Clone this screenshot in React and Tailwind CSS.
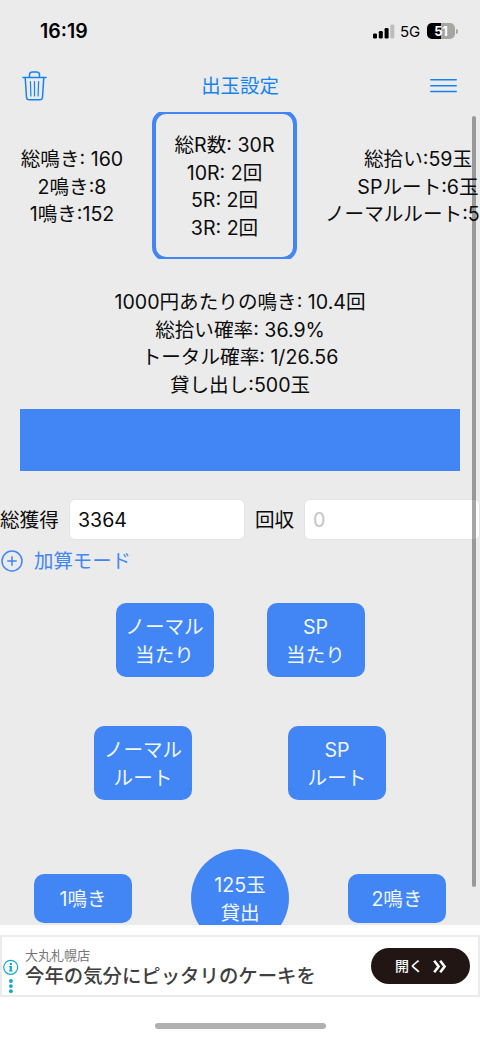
import React from 'react';

const leftStats = ['総鳴き: 160', '2鳴き:8', '1鳴き:152'];
const roundStats = ['総R数: 30R', '10R: 2回', '5R: 2回', '3R: 2回'];
const rightStats = ['総拾い:59玉', 'SPルート:6玉', 'ノーマルルート:53玉'];
const summary = ['1000円あたりの鳴き: 10.4回', '総拾い確率: 36.9%', 'トータル確率: 1/26.56', '貸し出し:500玉'];

function Lines({ items }) {
  return items.map((item) => (
    <p key={item} className="whitespace-nowrap">{item}</p>
  ));
}

function StatusBar() {
  return (
    <div className="flex h-[62px] shrink-0 items-center justify-between pl-10 pr-[22px] text-black">
      <span className="pt-px text-[19.5px] font-semibold">16:19</span>
      <div className="flex items-center">
        <svg width="22" height="15" viewBox="0 0 22 15">
          <rect x="0" y="9.5" width="4" height="5" rx="1.2" />
          <rect x="5.8" y="7" width="4" height="7.5" rx="1.2" />
          <rect x="11.6" y="4" width="4" height="10.5" rx="1.2" />
          <rect x="17.3" y="0.5" width="4" height="14" rx="1.2" fill="#bdbdbd" />
        </svg>
        <span className="ml-[5px] w-[23px] pt-px text-[15px] tracking-[-0.1px]">5G</span>
        {/* Battery */}
        <div className="ml-[4px] flex h-4 w-[28px] items-center justify-center overflow-hidden rounded-[5px] bg-[linear-gradient(90deg,#000_51%,#a5a5a5_51%)] text-[13px] font-bold leading-none tracking-[-0.3px] text-white">
          51
        </div>
        <div className="ml-px h-[5px] w-[2px] rounded-r-full bg-[#a5a5a5]" />
      </div>
    </div>
  );
}

function NavBar() {
  return (
    <header className="flex h-[50px] shrink-0 items-center justify-between pl-[22px] pr-[23px] pb-[3px] text-[#1684f0]">
      <svg width="25" height="30" viewBox="0 0 25 30" fill="none" stroke="currentColor" strokeWidth="1.5" strokeLinecap="round" strokeLinejoin="round">
        <path d="M1 6.5h23M7.5 6.5V4a3 3 0 0 1 3-3h4a3 3 0 0 1 3 3v2.5" />
        <path d="M3.2 6.5l1.3 19.7a2.8 2.8 0 0 0 2.8 2.6h10.4a2.8 2.8 0 0 0 2.8-2.6l1.3-19.7" />
        <path d="M8.4 10.5l.5 14.5M12.5 10.5V25M16.6 10.5L16.1 25" strokeWidth="1.2" />
      </svg>
      <h1 className="pl-[3px] pt-[3px] text-[19.4px]">出玉設定</h1>
      <svg width="27" height="16" viewBox="0 0 27 16" stroke="currentColor" strokeWidth="1.5" strokeLinecap="round">
        <path d="M.8 1.8h25.4M.8 7.7h25.4M.8 13.6h25.4" />
      </svg>
    </header>
  );
}

function ActionButton({ children, short }) {
  return (
    <button className={`flex w-[98px] shrink-0 items-center justify-center rounded-[10px] bg-[#4286f5] pt-[3px] text-[#f2f6ff] ${short ? 'h-[49px]' : 'h-[74px]'}`}>
      <span>{children}</span>
    </button>
  );
}

function AdBanner() {
  return (
    <div className="mt-[10px] flex h-[62px] items-center border-2 border-[#ebebeb] bg-white font-['Noto_Sans_CJK_JP','Noto_Sans',sans-serif]">
      <svg className="mt-[22px] shrink-0" width="17" height="36" viewBox="0 0 17 36" fill="#12a8cb">
        <circle cx="8.7" cy="8.3" r="7" fill="none" stroke="#12a8cb" strokeWidth="1.2" />
        <path d="M7.8 3.9h2.1v2H7.8zM6.9 7h3v4.6h.8v1H6.8v-1h.9V8h-.8z" />
        <circle cx="8.9" cy="22" r="1.9" />
        <circle cx="8.9" cy="27.1" r="1.9" />
        <circle cx="8.9" cy="32.2" r="1.9" />
      </svg>
      <div className="ml-[6px] flex-1 whitespace-nowrap">
        <p className="text-[13px] leading-[18px] text-[#777]">大丸札幌店</p>
        <p className="text-[19.4px] font-medium leading-[22px] text-[#3f3f3f]">今年の気分にピッタリのケーキを</p>
      </div>
      <div className="mr-[8px] flex h-[36px] w-[99px] items-center rounded-full bg-[#211613] pl-[24px] text-[14px] font-medium text-white">
        開く
        <svg className="ml-[10px]" width="14" height="13" viewBox="0 0 14 13" fill="none" stroke="currentColor" strokeWidth="2.6">
          <path d="M1.2 .8l4.4 5.7-4.4 5.7M7.2 .8l4.4 5.7-4.4 5.7" />
        </svg>
      </div>
    </div>
  );
}

export default function App() {
  return (
    <div className="flex h-[1039px] w-[480px] flex-col overflow-hidden bg-[#ebebeb] font-['Inter','Noto_Sans_CJK_JP',sans-serif] text-[19.6px] leading-[27.5px] text-[#0c0c0c]">
      <StatusBar />
      <NavBar />

      <main className="relative h-[813px] shrink-0 overflow-hidden">
        <section className="flex h-[147px] items-center overflow-hidden text-center">
          <div className="w-36 shrink-0 pt-[4px]">
            <Lines items={leftStats} />
          </div>
          <div className="ml-2 flex h-[151px] w-[145px] shrink-0 flex-col justify-center rounded-[14px] border-4 border-[#4286f5] pt-[3px]">
            <Lines items={roundStats} />
          </div>
          <div className="ml-[28px] w-[186px] shrink-0 pt-[4px]">
            <Lines items={rightStats} />
          </div>
        </section>

        <section className="mt-[30px] text-center">
          <Lines items={summary} />
        </section>

        <div className="mx-5 mt-[10px] h-[62px] bg-[#4286f5]" />

        <div className="mt-[26px] flex h-[44px] items-center whitespace-nowrap">
          <span className="w-[69px] shrink-0 pt-[4px]">総獲得</span>
          <div className="flex h-[41px] w-[176px] shrink-0 items-center rounded-md border border-[#e4e4e4] bg-white pl-[8px] pt-[3px]">3364</div>
          <span className="ml-[10px] w-[49px] shrink-0 pt-[4px]">回収</span>
          <div className="flex h-[41px] w-[176px] shrink-0 items-center rounded-md border border-[#e4e4e4] bg-white pl-[8px] pt-[3px] text-[#c4c4c6]">0</div>
        </div>

        <div className="mt-[6px] flex h-[28px] items-center text-[#4286f5]">
          <svg className="ml-px" width="22" height="22" viewBox="0 0 22 22" fill="none" stroke="currentColor" strokeWidth="1.5" strokeLinecap="round">
            <circle cx="11" cy="11" r="10" />
            <path d="M6.8 11h8.4M11 6.8v8.4" />
          </svg>
          <span className="ml-[11px] pt-px text-[19.4px]">加算モード</span>
        </div>

        <div className="mt-[28px] flex justify-center gap-[53px]">
          <ActionButton>ノーマル<br />当たり</ActionButton>
          <ActionButton>SP<br />当たり</ActionButton>
        </div>
        <div className="mt-[49px] flex justify-center gap-24">
          <ActionButton>ノーマル<br />ルート</ActionButton>
          <ActionButton>SP<br />ルート</ActionButton>
        </div>
        <div className="mt-[49px] flex items-center justify-center gap-[59px]">
          <ActionButton short>1鳴き</ActionButton>
          <button className="h-[98px] w-[98px] rounded-full bg-[#4286f5] pt-[3px] text-[#f2f6ff]">
            125玉<br />貸出
          </button>
          <ActionButton short>2鳴き</ActionButton>
        </div>

        {/* Scroll indicator */}
        <div className="absolute right-[4px] top-[4px] h-[771px] w-[4px] rounded-full bg-black/35" />
      </main>

      <footer className="flex-1 bg-white">
        <AdBanner />
        <div className="mx-auto mt-[26px] h-[6px] w-[171px] rounded-full bg-[#b0b0b0]" />
      </footer>
    </div>
  );
}
